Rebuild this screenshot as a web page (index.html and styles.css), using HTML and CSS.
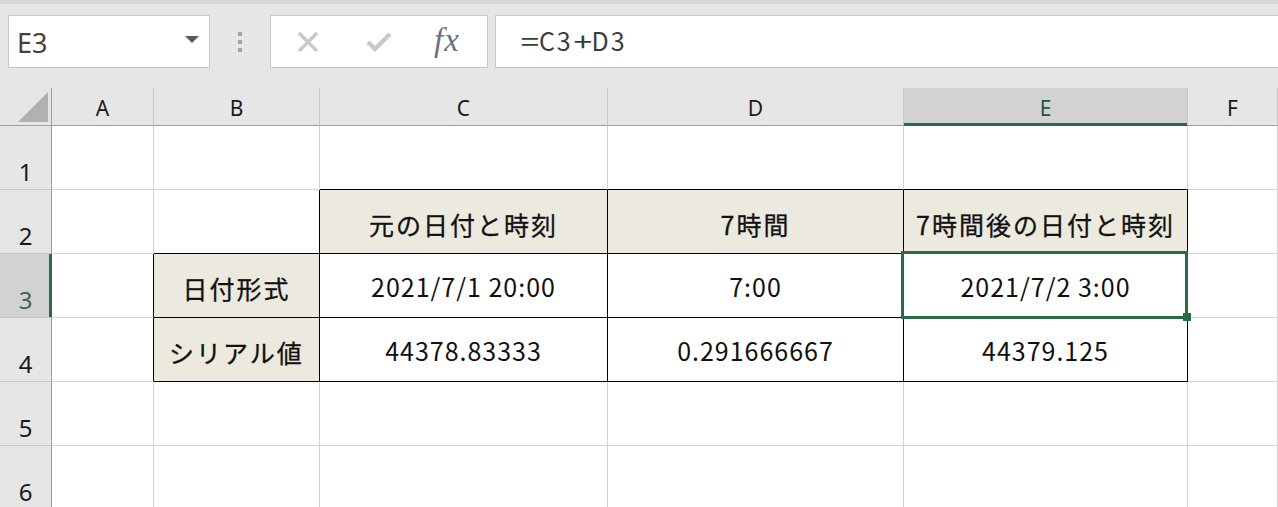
FILE: index.html
```html
<!DOCTYPE html>
<html lang="ja">
    <head>
        <meta charset="utf-8">
        <title>Book1 - Excel</title>
        <link rel="stylesheet" href="styles.css">
    </head>
    <body>
        <div class="toolbar">
            <div class="namebox">
                <span class="ref">E3</span>
                <span class="caret"></span>
            </div>
            <div class="grip"><i></i><i></i><i></i></div>
            <div class="fxbox">
                <svg class="ico-cancel" width="22" height="22" viewBox="0 0 22 22">
                    <path d="M2 2 L20 20 M20 2 L2 20" stroke="#c9c9c9" stroke-width="3.4" fill="none"/>
                </svg>
                <svg class="ico-enter" width="26" height="22" viewBox="0 0 26 22">
                    <path d="M2 11 L9 18 L24 3" stroke="#c9c9c9" stroke-width="4.4" fill="none"/>
                </svg>
                <span class="fx">fx</span>
            </div>
            <div class="formula"><span class="op">=</span>C3<span class="op">+</span>D3</div>
        </div>

        <div class="sheet">
            <!-- column headers -->
            <div class="cell corner"></div>
            <div class="cell head">A</div>
            <div class="cell head">B</div>
            <div class="cell head">C</div>
            <div class="cell head">D</div>
            <div class="cell head head-on">E</div>
            <div class="cell head">F</div>

            <!-- row 1 -->
            <div class="cell rowhead">1</div>
            <div class="cell"></div>
            <div class="cell"></div>
            <div class="cell line-b"></div>
            <div class="cell line-b"></div>
            <div class="cell line-b"></div>
            <div class="cell"></div>

            <!-- row 2 -->
            <div class="cell rowhead">2</div>
            <div class="cell"></div>
            <div class="cell line-r line-b"></div>
            <div class="cell line-r line-b tint label">元の日付と時刻</div>
            <div class="cell line-r line-b tint label">7時間</div>
            <div class="cell line-r line-b tint label">7時間後の日付と時刻</div>
            <div class="cell"></div>

            <!-- row 3 -->
            <div class="cell rowhead rowhead-on">3</div>
            <div class="cell line-r"></div>
            <div class="cell line-r line-b tint label">日付形式</div>
            <div class="cell line-r line-b value">2021/7/1 20:00</div>
            <div class="cell line-r line-b value">7:00</div>
            <div class="cell line-r line-b value current">2021/7/2 3:00</div>
            <div class="cell"></div>

            <!-- row 4 -->
            <div class="cell rowhead">4</div>
            <div class="cell line-r"></div>
            <div class="cell line-r line-b tint label">シリアル値</div>
            <div class="cell line-r line-b value">44378.83333</div>
            <div class="cell line-r line-b value">0.291666667</div>
            <div class="cell line-r line-b value">44379.125</div>
            <div class="cell"></div>

            <!-- row 5 -->
            <div class="cell rowhead">5</div>
            <div class="cell"></div>
            <div class="cell"></div>
            <div class="cell"></div>
            <div class="cell"></div>
            <div class="cell"></div>
            <div class="cell"></div>

            <!-- row 6 -->
            <div class="cell rowhead">6</div>
            <div class="cell"></div>
            <div class="cell"></div>
            <div class="cell"></div>
            <div class="cell"></div>
            <div class="cell"></div>
            <div class="cell"></div>
        </div>
    </body>
</html>
```

FILE: styles.css
```css
html, body {
    margin: 0;
    padding: 0;
    height: 100%;
    overflow: hidden;
    background: #ffffff;
    font-family: "Noto Sans", "Noto Sans CJK JP", sans-serif;
    color: #111111;
}

/* formula bar */

.toolbar {
    display: flex;
    align-items: flex-start;
    box-sizing: border-box;
    height: 88px;
    padding-top: 11px;
    border-top: 4px solid #d5d5d5;
    background: #e6e6e6;
}

.namebox {
    display: flex;
    align-items: center;
    justify-content: space-between;
    box-sizing: border-box;
    width: 202px;
    height: 53px;
    margin-left: 8px;
    padding: 0 10px 0 8px;
    background: #ffffff;
    border: 1px solid #c6c6c6;
}

.ref {
    font-size: 27px;
    color: #473f38;
    padding-top: 1px;
}

.caret {
    width: 0;
    height: 0;
    border-left: 7px solid transparent;
    border-right: 7px solid transparent;
    border-top: 7px solid #5a5a5a;
    margin-top: -4px;
}

.grip {
    display: flex;
    flex-direction: column;
    align-items: center;
    justify-content: center;
    gap: 4px;
    width: 60px;
    height: 53px;
}

.grip i {
    display: block;
    width: 4px;
    height: 4px;
    background: #a2a2a2;
}

.fxbox {
    display: flex;
    align-items: center;
    box-sizing: border-box;
    width: 218px;
    height: 53px;
    padding-left: 26px;
    background: #ffffff;
    border: 1px solid #c6c6c6;
}

.ico-enter {
    margin-left: 47px;
}

.fx {
    margin-left: 42px;
    font-family: "Liberation Serif", serif;
    font-style: italic;
    font-size: 33px;
    color: #687280;
    letter-spacing: 1px;
    padding-bottom: 2px;
}

.formula {
    flex: 1;
    box-sizing: border-box;
    height: 53px;
    margin-left: 7px;
    margin-right: -2px;
    padding-left: 24px;
    background: #ffffff;
    border: 1px solid #c6c6c6;
    font-family: "Noto Sans CJK JP", sans-serif;
    font-size: 25px;
    line-height: 49px;
    letter-spacing: 2px;
    color: #3c3c3c;
}

.formula .op {
    display: inline-block;
    transform: scaleX(1.35);
    margin: 0 2px 0 3px;
    letter-spacing: 0;
}

/* grid */

.sheet {
    display: grid;
    grid-template-columns: 52px 102px 166px 288px 296px 284px 1fr;
    grid-template-rows: 38px repeat(6, 64px);
}

.cell {
    box-sizing: border-box;
    display: flex;
    align-items: center;
    justify-content: center;
    border-right: 1px solid #d4d4d4;
    border-bottom: 1px solid #d4d4d4;
    font-family: "Noto Sans CJK JP", sans-serif;
    font-size: 25px;
    font-weight: 400;
    letter-spacing: 1px;
    white-space: nowrap;
}

.corner {
    position: relative;
    background: #e6e6e6;
    border-right-color: #9e9e9e;
    border-bottom-color: #9e9e9e;
}

.corner::before {
    content: '';
    position: absolute;
    right: 3px;
    bottom: 3px;
    width: 30px;
    height: 30px;
    background: #b3b1ad;
    clip-path: polygon(100% 0, 100% 100%, 0 100%);
}

.head {
    align-items: flex-end;
    padding-bottom: 6px;
    background: #e6e6e6;
    border-right-color: #c8c8c8;
    border-bottom-color: #9e9e9e;
    font-family: "Noto Sans", sans-serif;
    font-size: 21px;
    line-height: 1;
    letter-spacing: 0;
    color: #1a1a1a;
}

.head-on {
    background: #d2d2d2;
    border-bottom-color: #2a6b47;
    box-shadow: inset 0 -2px 0 #2a6b47;
    color: #22573f;
}

.rowhead {
    align-items: flex-end;
    padding-bottom: 5px;
    background: #e6e6e6;
    border-right-color: #9e9e9e;
    border-bottom-color: #c8c8c8;
    font-family: "Noto Sans", sans-serif;
    font-size: 24px;
    line-height: 1;
    letter-spacing: 0;
    color: #1a1a1a;
}

.rowhead-on {
    background: #d2d2d2;
    border-right-color: #2a6b47;
    box-shadow: inset -2px 0 0 #2a6b47;
    color: #3f6357;
}

.line-r {
    border-right-color: #000000;
}

.line-b {
    border-bottom-color: #000000;
}

.tint {
    background: #ece9df;
}

.label {
    padding-top: 4px;
    letter-spacing: 2px;
    -webkit-text-stroke: 0.3px #111111;
}

.value {
    letter-spacing: 1px;
}

/* active cell frame and fill handle */

.current {
    position: relative;
}

.current::after {
    content: '';
    position: absolute;
    left: -3px;
    top: -3px;
    right: -1px;
    bottom: -2px;
    border: 3px solid #2a6b47;
}

.current::before {
    content: '';
    position: absolute;
    right: -4px;
    bottom: -4px;
    width: 8px;
    height: 8px;
    background: #2a6b47;
    z-index: 2;
}
```
